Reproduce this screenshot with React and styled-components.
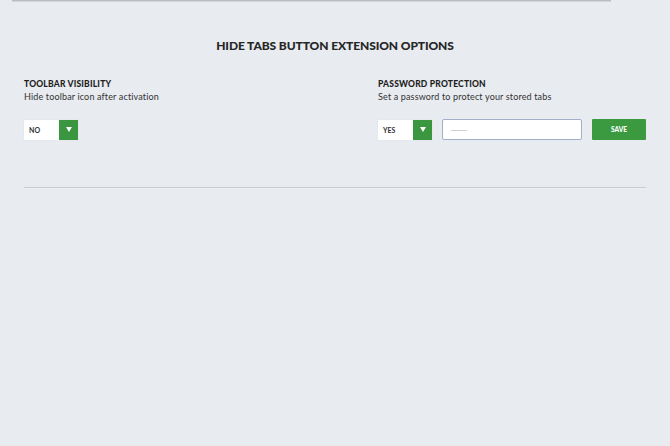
import React from 'react'
import styled, { createGlobalStyle } from 'styled-components'

const GlobalStyle = createGlobalStyle`
  html, body {
    margin: 0;
    padding: 0;
    background: #e8ebef;
    font-family: Lato, "Open Sans", sans-serif;
    color: #2b2b2b;
  }
`

const sections = [
  {
    title: 'Toolbar visibility',
    text: 'Hide toolbar icon after activation',
    value: 'NO',
  },
  {
    title: 'Password protection',
    text: 'Set a password to protect your stored tabs',
    value: 'YES',
    password: true,
  },
]

export default () => (
  <Page>
    <GlobalStyle />
    <TopRule />
    <Heading>Hide tabs button extension options</Heading>
    <Columns>
      {sections.map(({ title, text, value, password }) => (
        <Section key={title}>
          <Label>{title}</Label>
          <Hint>{text}</Hint>
          <Controls>
            <Select>
              <SelectValue>{value}</SelectValue>
              <SelectArrow>
                <svg width="6" height="5" viewBox="0 0 6 5">
                  <path d="M0 0h6L3 5z" fill="#fff" />
                </svg>
              </SelectArrow>
            </Select>
            {password && (
              <>
                <PasswordInput type="password" defaultValue="" placeholder="——" />
                <SaveButton>Save</SaveButton>
              </>
            )}
          </Controls>
        </Section>
      ))}
    </Columns>
    <BottomRule />
  </Page>
)

const Page = styled.div`
  width: 670px;
  min-height: 446px;
  display: flex;
  flex-direction: column;
`

const TopRule = styled.div`
  margin-left: 12px;
  width: 599px;
  height: 1px;
  background: #b9bcc0;
  box-shadow: 0 1px 0 #d4d7db;
`

const Heading = styled.h1`
  margin: 38px 0 0;
  text-align: center;
  font-size: 12px;
  font-weight: 900;
  line-height: 14px;
  text-transform: uppercase;
  letter-spacing: -0.1px;
  color: #262626;
`

const Columns = styled.div`
  display: grid;
  grid-template-columns: 1fr 268px;
  column-gap: 86px;
  padding: 0 24px;
  margin-top: 26px;
`

const Section = styled.div`
  display: flex;
  flex-direction: column;
`

const Label = styled.div`
  font-size: 8.5px;
  font-weight: 900;
  line-height: 11px;
  letter-spacing: 0.2px;
  text-transform: uppercase;
  color: #1e1e1e;
`

const Hint = styled.div`
  margin-top: 1px;
  font-size: 9px;
  line-height: 11px;
  letter-spacing: 0.15px;
  color: #333;
`

const Controls = styled.div`
  display: flex;
  align-items: center;
  margin-top: 17px;
  height: 21px;
`

const Select = styled.div`
  display: flex;
  width: 54px;
  height: 20px;
  background: #fff;
  box-shadow: 0 0 1px rgba(0, 0, 0, 0.08);
`

const SelectValue = styled.div`
  flex: 1;
  display: flex;
  align-items: center;
  padding-left: 5px;
  font-size: 7px;
  font-weight: 700;
  color: #333;
`

const SelectArrow = styled.div`
  width: 19px;
  display: flex;
  align-items: center;
  justify-content: center;
  background: #3b9640;
`

const PasswordInput = styled.input`
  box-sizing: border-box;
  margin-left: 10px;
  width: 140px;
  height: 21px;
  border: 1px solid #9fb0c8;
  border-radius: 2px;
  background: #fff;
  padding: 0 8px;
  font-size: 8px;
  outline: none;
  &::placeholder {
    color: #aaa;
  }
`

const SaveButton = styled.button`
  margin-left: 10px;
  width: 54px;
  height: 21px;
  border: none;
  border-radius: 1px;
  background: #3b9a40;
  color: #fff;
  font-family: Lato, sans-serif;
  font-size: 6.5px;
  font-weight: 900;
  text-transform: uppercase;
  padding: 0;
`

const BottomRule = styled.div`
  margin: 47px 24px 0;
  height: 1px;
  background: #c8cbcf;
  box-shadow: 0 1px 0 #eef0f2;
`
